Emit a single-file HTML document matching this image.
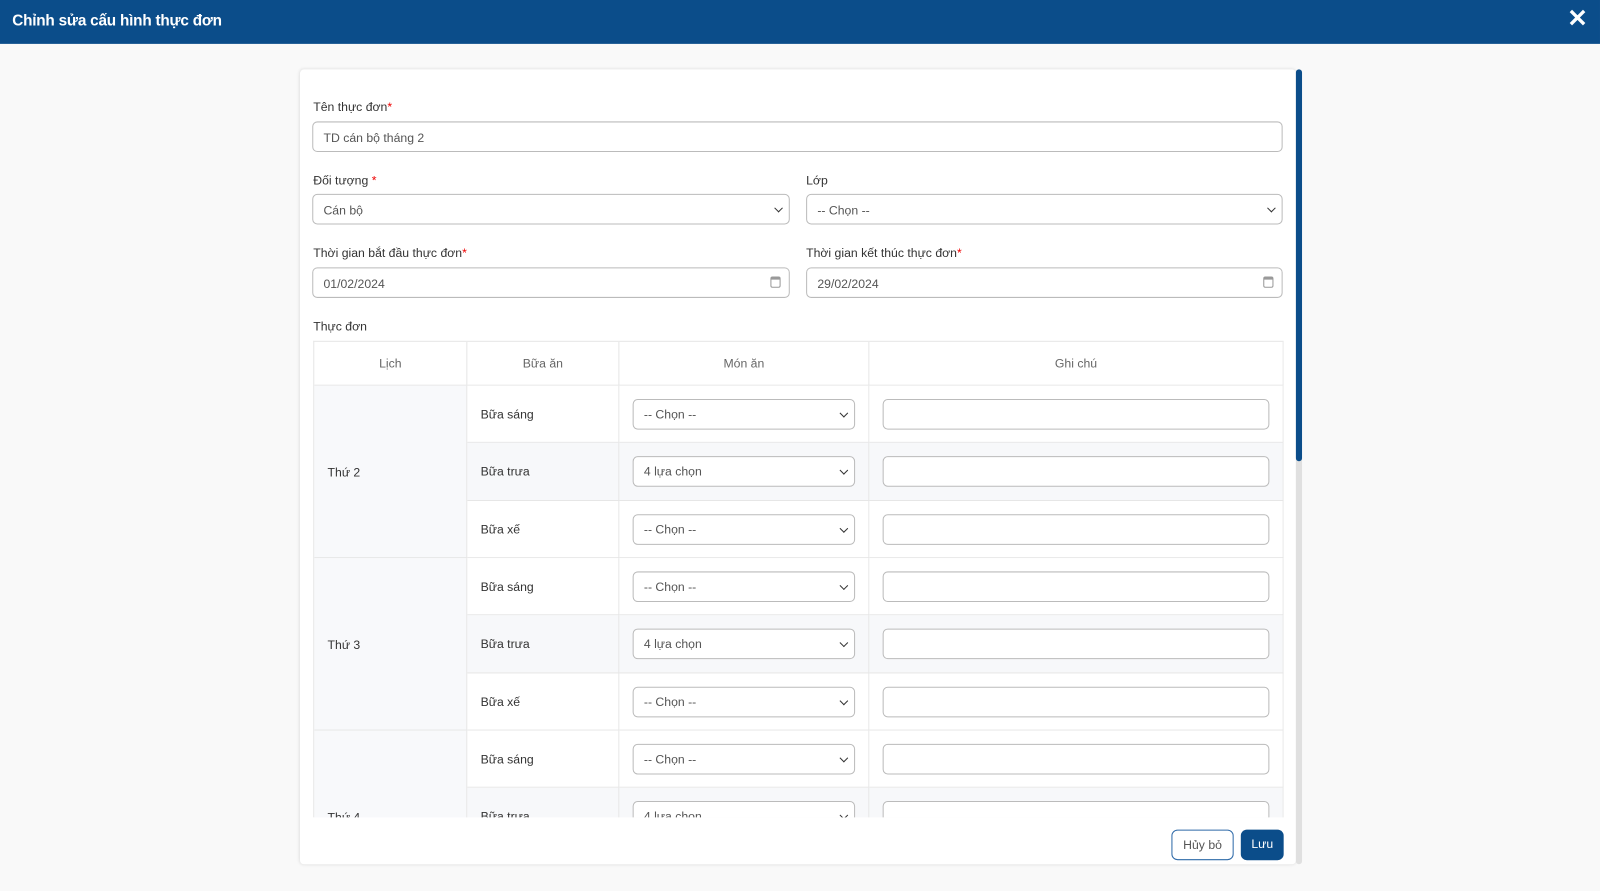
<!DOCTYPE html>
<html><head><meta charset="utf-8"><style>
*{box-sizing:border-box;margin:0;padding:0}
html,body{width:1600px;height:891px;overflow:hidden;background:#f9f9f9}
#w{width:1568px;height:873px;position:relative;transform:scale(1.0204);transform-origin:0 0;font-family:"Liberation Sans",sans-serif;color:#333}
.hdr{position:absolute;left:0;top:0;width:1568px;height:43px;background:#0b4d8a;color:#fff}
.hdr h1{position:absolute;left:12px;top:12px;font-size:15px;font-weight:bold;letter-spacing:-0.2px}
.x{position:absolute;right:12px;top:4px;font-size:24px;font-weight:bold;color:#fff}
.card{position:absolute;left:294px;top:68px;width:976px;height:779px;background:#fff;border-radius:4px;box-shadow:0 0 3px rgba(0,0,0,.12)}
.sb{position:absolute;left:1270px;top:68px;width:6px;height:779px;background:#e0e0e0;border-radius:3px}
.sb div{height:384px;background:#0b4d8a;border-radius:3px}
.lbl{position:absolute;font-size:12px;color:#333}
.lbl b{color:#e00;font-weight:normal}
.in{position:absolute;height:30px;border:1px solid #bbb;border-radius:5px;font-size:12px;color:#555;padding:8px 10px;background:#fff}
.sel::after{content:"";position:absolute;right:7px;top:10px;width:5px;height:5px;border-right:1.6px solid #333;border-bottom:1.6px solid #333;transform:rotate(45deg)}
.cal{position:absolute;right:8px;top:8px;width:10px;height:11px;border:1px solid #999;border-radius:2px;border-top-width:3px}
.clip{position:absolute;left:307px;top:334px;width:951px;height:467px;overflow:hidden}
.cell{position:absolute;border-right:1px solid #e6e6e6;border-bottom:1px solid #e6e6e6;font-size:12px;color:#333}
.th{color:#666;text-align:center;line-height:43px}
.btn{position:absolute;top:813px;height:30px;border-radius:6px;font-size:12px;text-align:center;line-height:28px}
</style></head><body><div id="w">
<div class="hdr"><h1>Chỉnh sửa cấu hình thực đơn</h1><div class="x">✕</div></div>
<div class="card"></div>
<div class="sb"><div></div></div>
<div class="lbl" style="left:307px;top:98px">Tên thực đơn<b>*</b></div>
<div class="in" style="left:306px;top:119px;width:951px">TD cán bộ tháng 2</div>
<div class="lbl" style="left:307px;top:170px">Đối tượng <b>*</b></div>
<div class="in sel" style="left:306px;top:190px;width:468px">Cán bộ</div>
<div class="lbl" style="left:790px;top:170px">Lớp</div>
<div class="in sel" style="left:790px;top:190px;width:467px">-- Chọn --</div>
<div class="lbl" style="left:307px;top:241px">Thời gian bắt đầu thực đơn<b>*</b></div>
<div class="in" style="left:306px;top:262px;width:468px">01/02/2024<div class="cal"></div></div>
<div class="lbl" style="left:790px;top:241px">Thời gian kết thúc thực đơn<b>*</b></div>
<div class="in" style="left:790px;top:262px;width:467px">29/02/2024<div class="cal"></div></div>
<div class="lbl" style="left:307px;top:313px">Thực đơn</div>
<div class="clip" style="border:1px solid #e6e6e6;border-right:none;border-bottom:none">
<div class="cell th" style="left:0;top:0;width:150px;height:43px">Lịch</div>
<div class="cell th" style="left:150px;top:0;width:149px;height:43px">Bữa ăn</div>
<div class="cell th" style="left:299px;top:0;width:245px;height:43px">Món ăn</div>
<div class="cell th" style="left:544px;top:0;width:406px;height:43px">Ghi chú</div>
<div id="rows"></div>
</div>
<div class="btn" style="left:1148px;width:61px;border:1px solid #2d69a8;color:#555;background:#fff">Hủy bỏ</div>
<div class="btn" style="left:1216px;width:42px;background:#0b4d8a;color:#fff">Lưu</div>
</div>
<script>
var r=document.getElementById('rows'),h='',days=['Thứ 2','Thứ 3','Thứ 4'],ms=['Bữa sáng','Bữa trưa','Bữa xế'];
for(var d=0;d<3;d++){var y0=43+d*169;
h+='<div class="cell" style="left:0;top:'+y0+'px;width:150px;height:169px;background:#f8f9fb;padding:78px 0 0 13px">'+days[d]+'</div>';
for(var m=0;m<3;m++){var y=y0+m*56.3,bg=m==1?'#f7f8fa':'#fff';
h+='<div class="cell" style="left:150px;top:'+y+'px;width:149px;height:56.3px;background:'+bg+';padding:21px 0 0 13px">'+ms[m]+'</div>';
h+='<div class="cell" style="left:299px;top:'+y+'px;width:245px;height:56.3px;background:'+bg+'"><div class="in sel" style="left:13px;top:13px;width:218px;height:30px;padding:7px 10px">'+(m==1?'4 lựa chọn':'-- Chọn --')+'</div></div>';
h+='<div class="cell" style="left:544px;top:'+y+'px;width:406px;height:56.3px;background:'+bg+'"><div class="in" style="left:13px;top:13px;width:379px;height:30px"></div></div>';}}
r.innerHTML=h;
</script>
</body></html>
